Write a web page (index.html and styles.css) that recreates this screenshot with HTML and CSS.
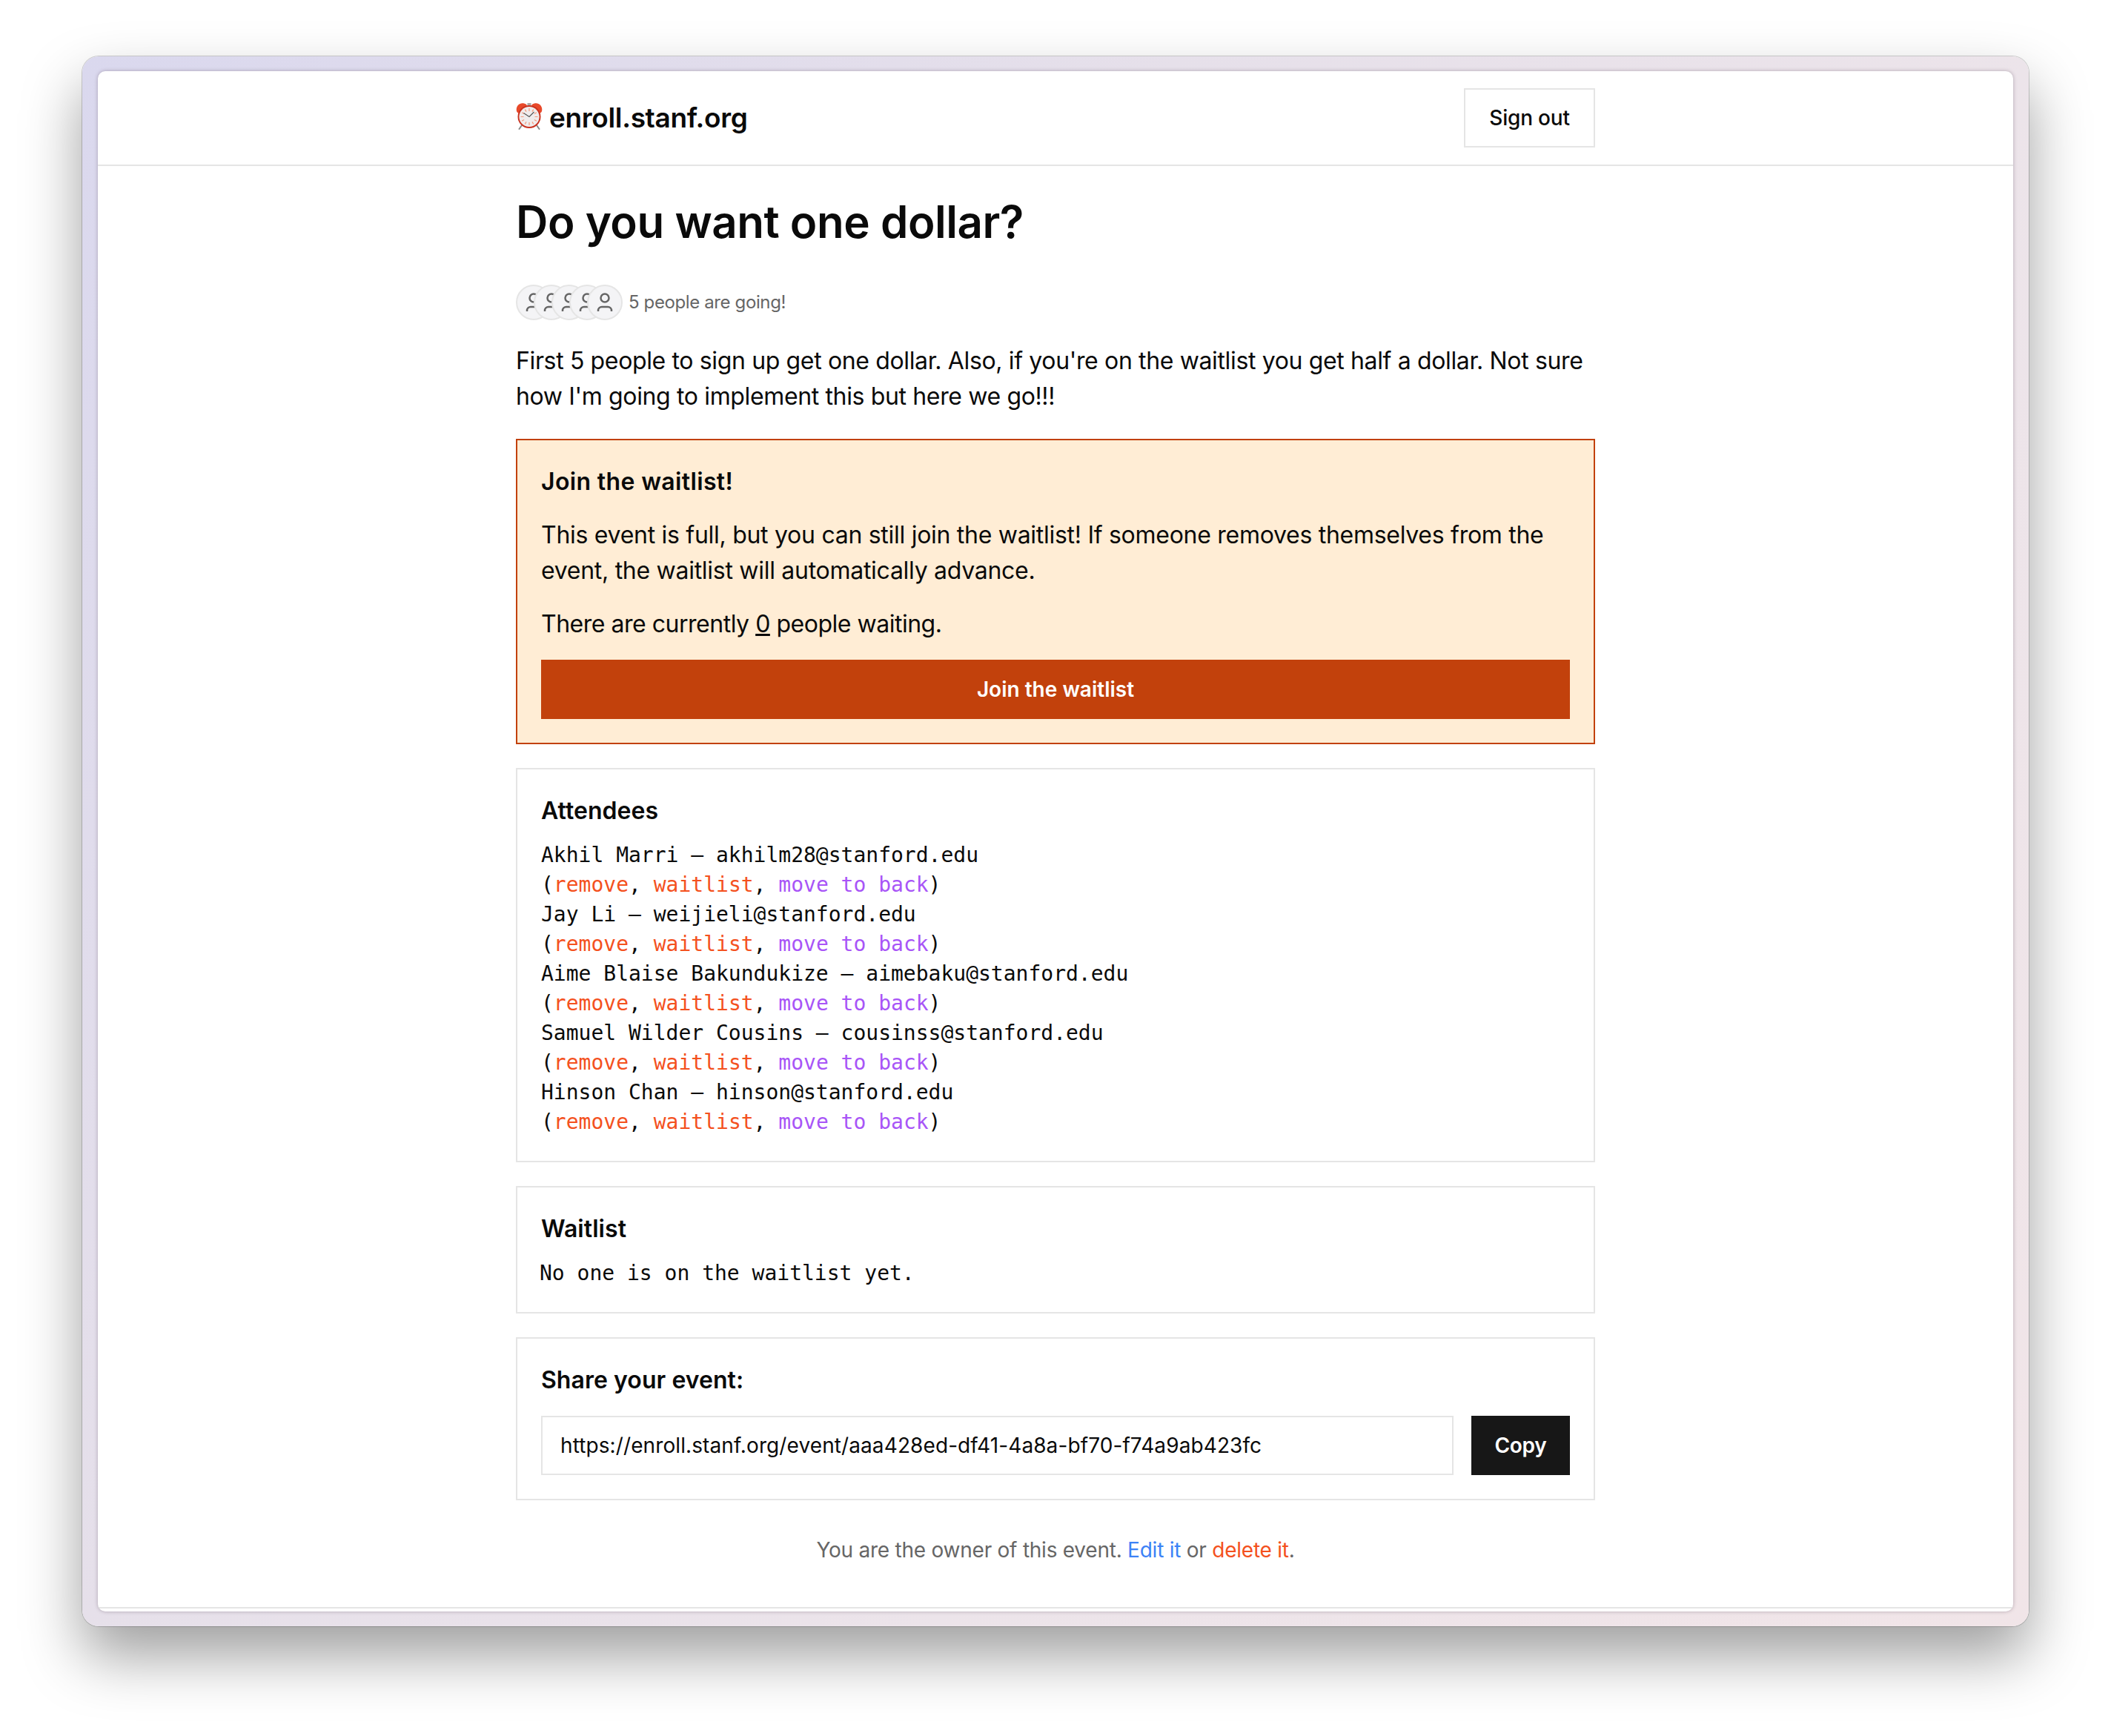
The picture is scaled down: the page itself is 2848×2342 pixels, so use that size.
FILE: index.html
```html
<!DOCTYPE html>
<html lang="en">
<head>
<meta charset="utf-8">
<title>Do you want one dollar?</title>
<link rel="stylesheet" href="styles.css">
</head>
<body>
<div class="frame">
  <div class="page">
    <header class="topbar">
      <div class="topbar-inner">
        <a class="brand">
          <svg class="clock" viewBox="0 0 36 37" aria-hidden="true">
            <path d="M15.500 1h5v3.500h-5z" fill="#a8a8a8"/>
            <path d="M1 12C-.5 5.500 4.500 0 11 1.500c2 .5 3.500 1.500 4 2.800L3.500 14.500C2 14 1.300 13.200 1 12z" fill="#e8492a"/>
            <path d="M35 12C36.500 5.500 31.500 0 25 1.500c-2 .5-3.500 1.500-4 2.800L32.500 14.500C34 14 34.700 13.200 35 12z" fill="#e8492a"/>
            <path d="M8 31l-3.500 5M28 31l3.500 5" stroke="#8a8a8a" stroke-width="2" stroke-linecap="round"/>
            <circle cx="18" cy="19.500" r="15.500" fill="#c9321f"/>
            <circle cx="18" cy="19.500" r="13.600" fill="#f0ecec"/>
            <path d="M18 8v4M18 27v4M6.500 19.500H10.500M25.500 19.500h4M12.300 9.600l1.700 3M23.700 9.600L22 12.600M12.300 29.400l1.700-3M23.700 29.400L22 26.400M8.100 13.800l3 1.700M27.900 13.800L24.900 15.500M8.100 25.200l3-1.700M27.900 25.200L24.900 23.500" stroke="#f49a7c" stroke-width="1.200"/>
            <path d="M10.500 14.500l7.500 5 6.500-6.500" fill="none" stroke="#555" stroke-width="1.100"/>
          </svg>
          <span class="brand-name">enroll.stanf.org</span>
        </a>
        <a class="signout">Sign out</a>
      </div>
    </header>

    <main class="content">
      <h1 class="title">Do you want one dollar?</h1>

      <div class="going">
        <div class="avatars">
          <span class="avatar"><svg viewBox="0 0 28 28"><circle cx="14" cy="8" r="5.500"/><path d="M5 26v-1a5 5 0 0 1 5-5h8a5 5 0 0 1 5 5v1"/></svg></span>
          <span class="avatar"><svg viewBox="0 0 28 28"><circle cx="14" cy="8" r="5.500"/><path d="M5 26v-1a5 5 0 0 1 5-5h8a5 5 0 0 1 5 5v1"/></svg></span>
          <span class="avatar"><svg viewBox="0 0 28 28"><circle cx="14" cy="8" r="5.500"/><path d="M5 26v-1a5 5 0 0 1 5-5h8a5 5 0 0 1 5 5v1"/></svg></span>
          <span class="avatar"><svg viewBox="0 0 28 28"><circle cx="14" cy="8" r="5.500"/><path d="M5 26v-1a5 5 0 0 1 5-5h8a5 5 0 0 1 5 5v1"/></svg></span>
          <span class="avatar"><svg viewBox="0 0 28 28"><circle cx="14" cy="8" r="5.500"/><path d="M5 26v-1a5 5 0 0 1 5-5h8a5 5 0 0 1 5 5v1"/></svg></span>
        </div>
        <span class="going-text">5 people are going!</span>
      </div>

      <p class="intro">First 5 people to sign up get one dollar. Also, if you're on the waitlist you get half a dollar. Not sure how I'm going to implement this but here we go!!!</p>

      <section class="card card-warn">
        <h2 class="card-title">Join the waitlist!</h2>
        <p class="card-text">This event is full, but you can still join the waitlist! If someone removes themselves from the event, the waitlist will automatically advance.</p>
        <p class="card-text card-count">There are currently <u>0</u> people waiting.</p>
        <button class="btn btn-warn" type="button">Join the waitlist</button>
      </section>

      <section class="card">
        <h2 class="card-title mono-gap">Attendees</h2>
        <div class="mono">
          <div>Akhil Marri – akhilm28@stanford.edu</div>
          <div>(<a class="red">remove</a>, <a class="red">waitlist</a>, <a class="purple">move to back</a>)</div>
          <div>Jay Li – weijieli@stanford.edu</div>
          <div>(<a class="red">remove</a>, <a class="red">waitlist</a>, <a class="purple">move to back</a>)</div>
          <div>Aime Blaise Bakundukize – aimebaku@stanford.edu</div>
          <div>(<a class="red">remove</a>, <a class="red">waitlist</a>, <a class="purple">move to back</a>)</div>
          <div>Samuel Wilder Cousins – cousinss@stanford.edu</div>
          <div>(<a class="red">remove</a>, <a class="red">waitlist</a>, <a class="purple">move to back</a>)</div>
          <div>Hinson Chan – hinson@stanford.edu</div>
          <div>(<a class="red">remove</a>, <a class="red">waitlist</a>, <a class="purple">move to back</a>)</div>
        </div>
      </section>

      <section class="card">
        <h2 class="card-title mono-gap">Waitlist</h2>
        <div class="mono mono-empty">No one is on the waitlist yet.</div>
      </section>

      <section class="card">
        <h2 class="card-title">Share your event:</h2>
        <div class="share-row">
          <div class="share-input">https://enroll.stanf.org/event/aaa428ed-df41-4a8a-bf70-f74a9ab423fc</div>
          <button class="btn btn-copy" type="button">Copy</button>
        </div>
      </section>

      <p class="owner">You are the owner of this event. <a class="blue">Edit it</a> or <a class="red">delete it</a>.</p>
    </main>
    <div class="page-end"></div>
  </div>
</div>
</body>
</html>
```

FILE: styles.css
```css
* { box-sizing: border-box; }
html, body { margin: 0; padding: 0; background: #fff; }
body {
  padding: 76px 111px 148px;
  font-family: Inter, "Liberation Sans", sans-serif;
  font-size: 32px;
  line-height: 48px;
  letter-spacing: -0.28px;
  color: #0a0a0a;
}
.frame {
  padding: 20px 21px;
  border-radius: 22px;
  background: linear-gradient(125deg, #dad8ee 0%, #e6e0ea 36%, #ece4ea 64%, #f1e5e8 100%);
  box-shadow: 0 0 0 1px rgba(0,0,0,.18), 0 40px 80px rgba(0,0,0,.38);
}
.page {
  background: #fff;
  border-radius: 10px;
  box-shadow: 0 0 5px rgba(70,50,70,.35);
  overflow: hidden;
}
.topbar { border-bottom: 2px solid #e5e5e5; }
.topbar-inner {
  width: 1456px;
  margin: 0 auto;
  height: 126px;
  display: flex;
  justify-content: space-between;
  align-items: center;
}
.brand { display: flex; align-items: center; gap: 9px; }
.clock { width: 36px; height: 37px; margin-bottom: 6px; }
.brand-name { font-size: 37px; font-weight: 600; letter-spacing: -0.35px; margin-bottom: 1px; }
.signout {
  width: 177px;
  height: 80px;
  border: 2px solid #e5e5e5;
  display: flex;
  align-items: center;
  justify-content: center;
  font-size: 28px;
  font-weight: 500;
  letter-spacing: -0.2px;
}
.content { width: 1456px; margin: 0 auto; }
.title { margin: 0; padding-top: 39px; font-size: 60px; line-height: 72px; font-weight: 600; letter-spacing: -0.45px; }
.going { display: flex; align-items: center; gap: 8px; margin-top: 49px; }
.avatars { display: flex; }
.avatar {
  width: 48px;
  height: 48px;
  border-radius: 50%;
  background: #f4f4f6;
  border: 2px solid #e5e5e5;
  display: flex;
  align-items: center;
  justify-content: center;
  margin-right: -24px;
}
.avatar:last-child { margin-right: 0; }
.avatar svg { width: 28px; height: 28px; fill: none; stroke: #666; stroke-width: 2.5; }
.going-text { font-size: 24px; color: #666; line-height: 48px; letter-spacing: -0.38px; }
.intro { margin: 31px 0 33px; letter-spacing: -0.36px; }
.card { border: 2px solid #e5e5e5; padding: 32px; margin-bottom: 32px; }
.card-warn { background: #ffedd5; border-color: #c2410c; }
.card-title { margin: 0; font-size: 32px; line-height: 48px; font-weight: 600; letter-spacing: 0.05px; }
.card-warn .card-title { letter-spacing: 0.35px; }
.card-text { margin: 24px 0 0; }
.card-count { letter-spacing: -0.48px; }
.mono-gap { margin-bottom: 16px; }
.mono { font-family: "DejaVu Sans Mono", monospace; font-size: 28px; line-height: 40px; letter-spacing: 0; }
.mono-empty { margin-left: -2px; }
.btn { border: 0; height: 80px; font-family: inherit; color: #fff; display: block; }
.btn-warn { width: 100%; margin-top: 24px; background: #c2410c; font-size: 28px; font-weight: 600; }
.share-row { display: flex; gap: 24px; margin-top: 24px; }
.share-input {
  flex: 1;
  height: 80px;
  border: 2px solid #e5e5e5;
  padding: 0 24px;
  display: flex;
  align-items: center;
  font-size: 28px;
  letter-spacing: 0.1px;
}
.btn-copy { width: 133px; background: #171717; font-size: 28px; font-weight: 600; letter-spacing: -0.3px; }
.owner { margin: 43px 0 0; text-align: center; color: #666; font-size: 28px; letter-spacing: -0.24px; }
.page-end { margin-top: 53px; height: 2px; background: #e5e5e5; margin-bottom: 4px; }
.red { color: #f4511e; }
.purple { color: #a855f7; }
.blue { color: #3b82f6; }
```
